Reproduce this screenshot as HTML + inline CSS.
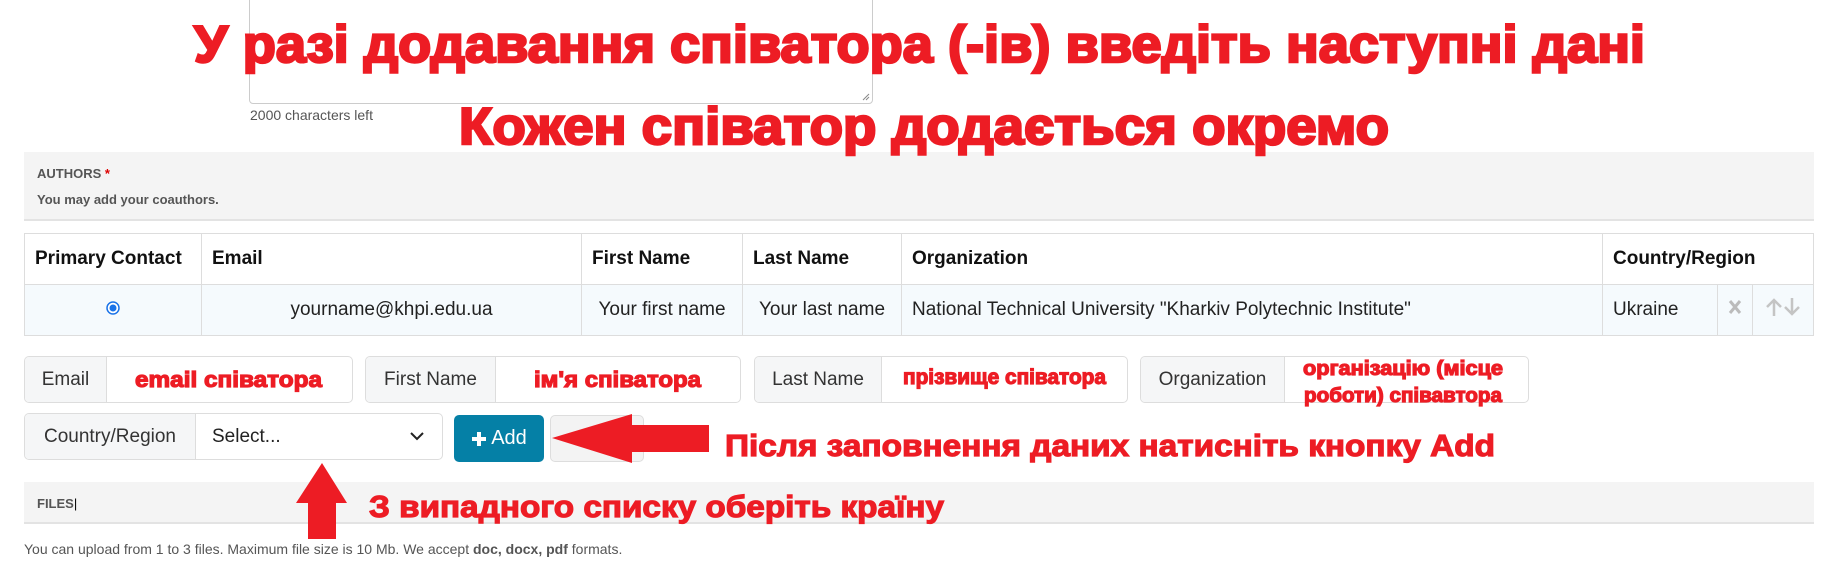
<!DOCTYPE html>
<html><head><meta charset="utf-8"><style>
*{box-sizing:border-box;margin:0;padding:0}
body{width:1846px;height:572px;background:#fff;position:relative;overflow:hidden;font-family:"Liberation Sans",Arial,sans-serif;color:#222}
.a{position:absolute}
.ta{left:249px;top:-10px;width:624px;height:114px;border:1px solid #ccc;border-radius:4px}
.panel{left:24px;width:1790px;background:#f4f4f4;border-bottom:2px solid #e3e3e3}
table{position:absolute;left:24px;top:233px;width:1790px;border-collapse:collapse}
td,th{border:1px solid #ddd;font-size:19px;text-align:left;padding:0 10px;height:51px}
th{font-weight:bold;color:#111}
tbody td{background:#f5fafd;color:#222}
.grp{height:47px;border:1px solid #ddd;border-radius:5px;display:flex;overflow:hidden;background:#fff}
.grp .l{background:#f5f6f7;border-right:1px solid #ddd;display:flex;align-items:center;justify-content:center;font-size:19px;color:#333}
.red{fill:#ed1c24;stroke:#ed1c24;stroke-width:1.2;font-family:"Liberation Sans",Arial,sans-serif;font-weight:bold}
.big{stroke-width:2.5}
</style></head><body>
<div class="a ta"><svg class="a" style="right:2px;bottom:2px" width="10" height="10"><path d="M9 3L3 9M9 6L6 9" stroke="#888" stroke-width="1"/></svg></div>
<div class="a" style="left:250px;top:107px;font-size:14px;color:#555">2000 characters left</div>

<div class="a panel" style="top:152px;height:69px"></div>
<div class="a" style="left:37px;top:166px;font-size:13px;font-weight:bold;color:#555">AUTHORS <span style="color:#d00">*</span></div>
<div class="a" style="left:37px;top:192px;font-size:13px;font-weight:bold;color:#555">You may add your coauthors.</div>

<table>
<thead><tr><th style="width:177px">Primary Contact</th><th style="width:380px">Email</th><th style="width:161px">First Name</th><th style="width:159px">Last Name</th><th style="width:701px">Organization</th><th colspan="3">Country/Region</th></tr></thead>
<tbody><tr>
<td style="text-align:center"><svg width="14" height="14"><circle cx="7" cy="7" r="6" fill="#fff" stroke="#1a73e8" stroke-width="1.5"/><circle cx="7" cy="7" r="3.5" fill="#1a73e8"/></svg></td>
<td style="text-align:center">yourname@khpi.edu.ua</td>
<td style="text-align:center">Your first name</td>
<td style="text-align:center">Your last name</td>
<td>National Technical University "Kharkiv Polytechnic Institute"</td>
<td style="width:115px">Ukraine</td>
<td style="width:35px;text-align:center"><svg width="14" height="16"><path d="M2 2L12 14M12 2L2 14" stroke="#bbb" stroke-width="3"/></svg></td>
<td style="text-align:center"><svg width="38" height="20"><path d="M10 19V3M3 10L10 3L17 10M28 1V17M21 10L28 17L35 10" stroke="#c4c4c4" stroke-width="2.5" fill="none"/></svg></td>
</tr></tbody></table>

<div class="a grp" style="left:24px;top:356px;width:329px"><div class="l" style="width:82px">Email</div></div>
<div class="a grp" style="left:365px;top:356px;width:376px"><div class="l" style="width:130px">First Name</div></div>
<div class="a grp" style="left:754px;top:356px;width:374px"><div class="l" style="width:127px">Last Name</div></div>
<div class="a grp" style="left:1140px;top:356px;width:389px"><div class="l" style="width:144px">Organization</div></div>

<div class="a grp" style="left:24px;top:413px;width:419px"><div class="l" style="width:171px">Country/Region</div><div style="flex:1;display:flex;align-items:center;padding-left:16px;font-size:19px;color:#222;position:relative">Select...<svg class="a" style="right:18px;top:18px" width="14" height="9"><path d="M1 1L7 7L13 1" stroke="#222" stroke-width="2" fill="none"/></svg></div></div>
<div class="a" style="left:454px;top:415px;width:90px;height:47px;background:#0580a6;border-radius:5px;color:#fff;font-size:20px;display:flex;align-items:center;justify-content:center"><svg width="16" height="16" style="margin-right:4px"><path d="M8 1V15M1 8H15" stroke="#fff" stroke-width="4"/></svg>Add</div>
<div class="a" style="left:550px;top:415px;width:94px;height:47px;background:#f3f3f3;border:1px solid #ddd;border-radius:5px"></div>

<div class="a panel" style="top:482px;height:42px"></div>
<div class="a" style="left:37px;top:496px;font-size:13px;font-weight:bold;color:#555">FILES<span style="font-weight:normal;color:#000">|</span></div>
<div class="a" style="left:24px;top:541px;font-size:14px;color:#555">You can upload from 1 to 3 files. Maximum file size is 10 Mb. We accept <b>doc, docx, pdf</b> formats.</div>

<svg class="a" style="left:0;top:0" width="1846" height="572">
<text class="red big" x="194" y="62" font-size="52" textLength="1451" lengthAdjust="spacingAndGlyphs">У разі додавання співатора (-ів) введіть наступні дані</text>
<text class="red big" x="459" y="144" font-size="52" textLength="930" lengthAdjust="spacingAndGlyphs">Кожен співатор додається окремо</text>
<text class="red" x="135" y="387" font-size="22" textLength="187" lengthAdjust="spacingAndGlyphs">email співатора</text>
<text class="red" x="534" y="387" font-size="22" textLength="167" lengthAdjust="spacingAndGlyphs">ім'я співатора</text>
<text class="red" x="903" y="384" font-size="21" textLength="203" lengthAdjust="spacingAndGlyphs">прізвище співатора</text>
<text class="red" x="1303" y="375" font-size="20" textLength="200" lengthAdjust="spacingAndGlyphs">організацію (місце</text>
<text class="red" x="1304" y="402" font-size="20" textLength="198" lengthAdjust="spacingAndGlyphs">роботи) співавтора</text>
<text class="red" x="725" y="456" font-size="31" textLength="770" lengthAdjust="spacingAndGlyphs">Після заповнення даних натисніть кнопку Add</text>
<text class="red" x="369" y="517" font-size="31" textLength="575" lengthAdjust="spacingAndGlyphs">З випадного списку оберіть країну</text>
<polygon points="552,438 632,414 632,425 709,425 709,452 632,452 632,463" fill="#ed1c24"/>
<polygon points="322,463 347,503 336,503 336,539 308,539 308,503 296,503" fill="#ed1c24"/>
</svg>
</body></html>
